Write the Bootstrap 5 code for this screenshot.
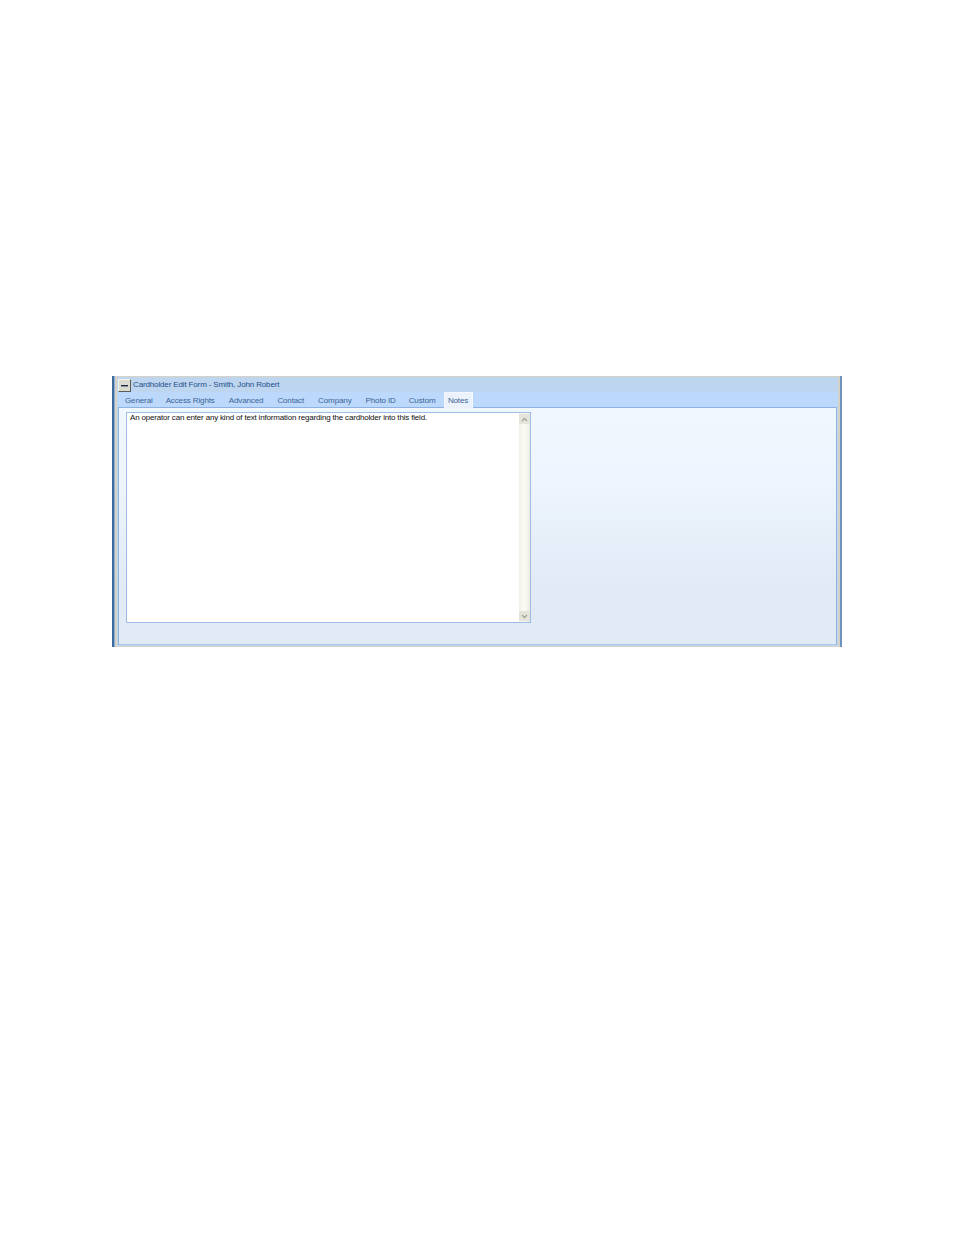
<!DOCTYPE html>
<html lang="en">
<head>
<meta charset="utf-8">
<title>Cardholder Edit Form</title>
<link rel="stylesheet" href="https://cdn.jsdelivr.net/npm/bootstrap@5.3.0/dist/css/bootstrap.min.css">
<style>
html,body{height:100%;background:#fff;}
body{font-family:"Liberation Sans",Arial,sans-serif;font-size:8px;line-height:1;padding:376px 112px 0 112px;color:#15428b;}
.win-frame{width:730px;height:271px;background:linear-gradient(90deg,#3f6a9e 0,#3f6a9e 2px,#8fb0d8 2px,#8fb0d8 100%);padding:0 2px 0 3px;position:relative;}
.win-frame::after{content:"";position:absolute;top:0;bottom:0;right:0;width:2px;background:#6f93c0;}
.win-inner{height:100%;background:#d6d3c6;padding:1px 2px;}
.win-body{height:100%;background:#bed6ee;}
.title-row{height:15px;background:#bdd5ee;padding-left:1px;}
.collapse-btn{width:13px;height:13px;background:#dcdbd2;border:1px solid;border-color:#f4f4ee #5a5a52 #5a5a52 #f4f4ee;padding:0;border-radius:0;margin-top:1px;}
.collapse-btn svg{display:block;margin:auto;}
.title-text{font-size:8px;letter-spacing:-.14px;line-height:16px;color:#24508c;margin-left:2px;}
.tab-row{height:15px;background:#bcd9fb;border:0;flex-wrap:nowrap;}
.tab-row .nav-link{font-size:8px;letter-spacing:-.12px;line-height:17px;height:15px;padding:0;color:#3b6497;border:0;border-radius:0;margin:0;white-space:nowrap;background:transparent;}
.tab-row .nav-item{display:block;}
.tab-row .nav-link.active{background:#ebf2fc;color:#3b6497;border:1px solid #f4f8fe;border-bottom:0;line-height:16px;height:16px;width:29px;padding:0;text-align:center;position:relative;z-index:1;}
.pane-area{height:238px;margin:0 1px;background:linear-gradient(#f1f7ff 0%,#eef5fe 30%,#e2eaf6 75%,#e2eaf6 100%);border:1px solid #8db2e3;border-bottom:1px solid #a9c8ec;padding:4px 0 0 7px;}
.note-box{width:405px;height:211px;background:#fff;border:1px solid #9dbde6;display:flex;}
.note-text{flex:1;padding:0 3px;color:#111;font-size:8px;letter-spacing:-.18px;line-height:10px;}
.sb{width:11px;padding:1px 0;background:linear-gradient(90deg,#f3f1e8,#fbfaf5 50%,#eeebe0);display:flex;flex-direction:column;justify-content:space-between;}
.sb-btn{width:11px;height:10px;background:#e6e4da;display:flex;align-items:center;justify-content:center;}
.t1{margin-left:8px}.t2{margin-left:13px}.t3{margin-left:14px}.t4{margin-left:14px}.t5{margin-left:14px}.t6{margin-left:14px}.t7{margin-left:13px}.t8{margin-left:8px}
</style>
</head>
<body>
<div class="win-frame">
  <div class="win-inner">
    <div class="win-body">
      <div class="title-row d-flex align-items-center">
        <button type="button" class="btn collapse-btn d-flex align-items-center" aria-label="Collapse"><svg width="7" height="3" viewBox="0 0 7 3"><rect y="1" width="7" height="1.4" fill="#1b2a44"/></svg></button>
        <span class="title-text">Cardholder Edit Form - Smith, John Robert</span>
      </div>
      <ul class="nav nav-tabs tab-row">
        <li class="nav-item t1"><a class="nav-link" href="#">General</a></li>
        <li class="nav-item t2"><a class="nav-link" href="#">Access Rights</a></li>
        <li class="nav-item t3"><a class="nav-link" href="#">Advanced</a></li>
        <li class="nav-item t4"><a class="nav-link" href="#">Contact</a></li>
        <li class="nav-item t5"><a class="nav-link" href="#">Company</a></li>
        <li class="nav-item t6"><a class="nav-link" href="#">Photo ID</a></li>
        <li class="nav-item t7"><a class="nav-link" href="#">Custom</a></li>
        <li class="nav-item t8"><a class="nav-link active" href="#">Notes</a></li>
      </ul>
      <div class="pane-area">
        <div class="note-box">
          <div class="note-text">An operator can enter any kind of text information regarding the cardholder into this field.</div>
          <div class="sb">
            <div class="sb-btn"><svg width="7" height="5" viewBox="0 0 7 5"><path d="M1 4 3.5 1.5 6 4" fill="none" stroke="#a3a89a" stroke-width="1.4"/></svg></div>
            <div class="sb-btn"><svg width="7" height="5" viewBox="0 0 7 5"><path d="M1 1 3.5 3.5 6 1" fill="none" stroke="#a3a89a" stroke-width="1.4"/></svg></div>
          </div>
        </div>
      </div>
    </div>
  </div>
</div>
<script src="https://cdn.jsdelivr.net/npm/bootstrap@5.3.0/dist/js/bootstrap.bundle.min.js"></script>
</body>
</html>
